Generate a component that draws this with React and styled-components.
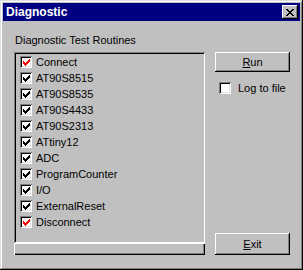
import React from "react";
import styled, { createGlobalStyle } from "styled-components";

const Global = createGlobalStyle`
  html, body { margin: 0; padding: 0; background: #c0c0c0; }
  * { box-sizing: border-box; }
`;

const Window = styled.div`
  width: 303px;
  height: 270px;
  background: #c0c0c0;
  padding: 3px;
  box-shadow: inset -1px -1px #000, inset 1px 1px #dfdfdf, inset -2px -2px #808080, inset 2px 2px #fff;
  font-family: "Liberation Sans", Arial, sans-serif;
  font-size: 11px;
  color: #000;
  display: flex;
  flex-direction: column;
`;

const TitleBar = styled.div`
  height: 18px;
  background: #000080;
  display: flex;
  align-items: center;
  justify-content: space-between;
  padding: 0 2px 0 3px;
`;

const Title = styled.span`
  color: #fff;
  font-weight: bold;
  font-size: 12px;
`;

const CloseButton = styled.div`
  width: 16px;
  height: 14px;
  background: #c0c0c0;
  box-shadow: inset -1px -1px #000, inset 1px 1px #fff, inset -2px -2px #808080;
  display: flex;
  align-items: center;
  justify-content: center;
`;

const Body = styled.div`
  flex: 1;
  display: flex;
  padding: 13px 10px 0 11px;
  gap: 10px;
`;

const LeftCol = styled.div`
  width: 191px;
  display: flex;
  flex-direction: column;
`;

const Label = styled.div`
  height: 13px;
  line-height: 13px;
  margin: 0 0 5px 1px;
`;

const ListBox = styled.div`
  height: 191px;
  padding: 2px 2px;
  box-shadow: inset 1px 1px #808080, inset -1px -1px #fff, inset 2px 2px #000, inset -2px -2px #c0c0c0;
`;

const Row = styled.div`
  height: 16px;
  display: flex;
  align-items: center;
  padding-left: 4px;
  gap: 4px;
  white-space: nowrap;
`;

const Box = styled.div`
  width: 12px;
  height: 12px;
  background: #fff;
  box-shadow: inset 1px 1px #808080, inset -1px -1px #fff, inset 2px 2px #000, inset -2px -2px #dfdfdf;
  display: flex;
  align-items: center;
  justify-content: center;
  flex: none;
`;

const Progress = styled.div`
  height: 12px;
  box-shadow: inset 1px 1px #fff, inset -1px -1px #000, inset -2px -2px #808080;
`;

const RightCol = styled.div`
  width: 75px;
  display: flex;
  flex-direction: column;
  padding-top: 18px;
  padding-bottom: 12px;
`;

const Button = styled.div`
  height: ${(p) => p.$h}px;
  background: #c0c0c0;
  box-shadow: inset -1px -1px #000, inset 1px 1px #fff, inset -2px -2px #808080;
  display: flex;
  align-items: center;
  justify-content: center;
  margin-top: ${(p) => (p.$bottom ? "auto" : "0")};
  u { text-decoration: underline; }
`;

const CheckLine = styled.div`
  display: flex;
  align-items: center;
  gap: 7px;
  margin: 10px 0 0 4px;
`;

function Check({ color }) {
  return (
    <svg width="7" height="7" viewBox="0 0 7 7" shapeRendering="crispEdges">
      <path
        fill={color}
        d="M6 0h1v3h-1zM5 1h1v3h-1zM4 2h1v3h-1zM3 3h1v3h-1zM2 4h1v3h-1zM1 3h1v3h-1zM0 2h1v3h-1z"
      />
    </svg>
  );
}

const items = [
  ["Connect", "#ff0000"],
  ["AT90S8515", "#000"],
  ["AT90S8535", "#000"],
  ["AT90S4433", "#000"],
  ["AT90S2313", "#000"],
  ["ATtiny12", "#000"],
  ["ADC", "#000"],
  ["ProgramCounter", "#000"],
  ["I/O", "#000"],
  ["ExternalReset", "#000"],
  ["Disconnect", "#ff0000"],
];

export default function App() {
  return (
    <>
      <Global />
      <Window>
        <TitleBar>
          <Title>Diagnostic</Title>
          <CloseButton>
            <svg width="8" height="7" viewBox="0 0 8 7" shapeRendering="crispEdges">
              <path
                fill="#000"
                d="M0 0h2v1h-2zM6 0h2v1h-2zM1 1h2v1h-2zM5 1h2v1h-2zM2 2h4v1h-4zM3 3h2v1h-2zM2 4h4v1h-4zM1 5h2v1h-2zM5 5h2v1h-2zM0 6h2v1h-2zM6 6h2v1h-2z"
              />
            </svg>
          </CloseButton>
        </TitleBar>
        <Body>
          <LeftCol>
            <Label>Diagnostic Test Routines</Label>
            <ListBox>
              {items.map(([name, color]) => (
                <Row key={name}>
                  <Box>
                    <Check color={color} />
                  </Box>
                  <span>{name}</span>
                </Row>
              ))}
            </ListBox>
            <Progress />
          </LeftCol>
          <RightCol>
            <Button $h={20}>
              <span>
                <u>R</u>un
              </span>
            </Button>
            <CheckLine>
              <Box />
              <span>Log to file</span>
            </CheckLine>
            <Button $h={22} $bottom>
              <span>
                <u>E</u>xit
              </span>
            </Button>
          </RightCol>
        </Body>
      </Window>
    </>
  );
}
